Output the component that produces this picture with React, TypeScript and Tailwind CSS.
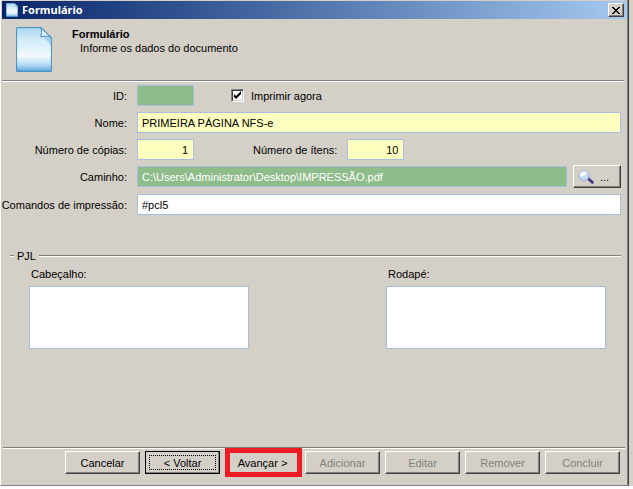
import { useState } from 'react';
import clsx from 'clsx';

const raised =
  'border border-t-white border-l-white border-r-[#404040] border-b-[#404040] shadow-[inset_-1px_-1px_0_#808080]';
const field = 'h-[21px] min-w-0 border border-[#a7bfde] pr-[5px] pl-1 text-[11px] leading-[19px] outline-none';
const label = 'flex w-[119px] shrink-0 justify-end whitespace-nowrap';

const footerButtons = [
  { id: 'cancel', text: 'Cancelar' },
  { id: 'back', text: '< Voltar', focused: true },
  { id: 'next', text: 'Avançar >', marked: true },
  { id: 'add', text: 'Adicionar', disabled: true },
  { id: 'edit', text: 'Editar', disabled: true },
  { id: 'remove', text: 'Remover', disabled: true },
  { id: 'finish', text: 'Concluir', disabled: true },
];

function PageIcon({ id, className }: { id: string; className: string }) {
  return (
    <svg viewBox="0 0 36 45" className={className} preserveAspectRatio="none" aria-hidden="true">
      <defs>
        <linearGradient id={id} x1="0" y1="0" x2="0" y2="1">
          <stop offset="0" stopColor="#a9d6ef" />
          <stop offset="0.3" stopColor="#d5edf9" />
          <stop offset="0.65" stopColor="#f3fafe" />
          <stop offset="0.85" stopColor="#b5dbf5" />
          <stop offset="1" stopColor="#5ba3dc" />
        </linearGradient>
      </defs>
      <path d="M.6 .6H25L35.4 10.5V44.4H.6Z" fill={`url(#${id})`} stroke="#3f8fc0" strokeWidth="1" />
      <path d="M26 10L35 11V19C33 15 30 12 26 10Z" fill="#7fb8de" opacity=".55" />
      <path d="M24.8 .8C26 4 25.8 7 24.6 9.8C28.8 8.7 32.5 9 35.2 10.6Z" fill="#e4f4fc" stroke="#3f8fc0" strokeWidth="1" />
    </svg>
  );
}

function SearchIcon() {
  return (
    <svg viewBox="0 0 16 14" className="h-[14px] w-4 shrink-0" aria-hidden="true">
      <path d="M9.5 8L14.4 12.4" stroke="#453c8c" strokeWidth="2.8" strokeLinecap="round" />
      <circle cx="6" cy="5.6" r="5" fill="#c0dcf8" stroke="#a3a9d6" strokeWidth="1" />
      <path d="M2 6.4A4.2 4.2 0 0 1 9.2 2.6A7 7 0 0 1 2 6.4Z" fill="#f5fbff" />
    </svg>
  );
}

function Rule() {
  return <div className="h-0.5 border-t border-b border-t-[#808080] border-b-white" />;
}

export default function App() {
  const [printNow, setPrintNow] = useState(true);

  return (
    <div className="min-h-screen bg-white font-['Liberation_Sans',Arial,sans-serif] text-[11px] leading-[14px] text-black">
      <div className="bg-[#d4d0c8] pr-1">
        <div className="flex min-h-[calc(100vh-3px)] flex-col border-r border-b border-l border-l-white border-r-[#404040] border-b-[#808080] bg-[#d4d0c8] pt-px pl-px shadow-[inset_-1px_0_0_#808080]">
          <div className="mr-px flex h-[18px] items-center bg-linear-to-r from-[#0a246a] to-[#a6caf0] pr-[3px] pl-1">
            <PageIcon id="title-page" className="h-[14px] w-3" />
            <h1 className="ml-1 flex-1 font-['Noto_Sans',sans-serif] font-bold text-white">Formulário</h1>
            <button aria-label="Fechar" className={clsx('flex h-[14px] w-4 items-center justify-center bg-[#d4d0c8]', raised)}>
              <svg viewBox="0 0 8 7" className="h-[7px] w-2" shapeRendering="crispEdges" aria-hidden="true">
                <path
                  d="M0 0h2v1h1v1h2V1h1V0h2v1H7v1H6v1H5v1h1v1h1v1h1v1H6V6H5V5H3v1H2v1H0V6h1V5h1V4h1V3H2V2H1V1H0Z"
                  fill="#000"
                />
              </svg>
            </button>
          </div>

          <header className="flex h-[61px] items-start pt-2 pl-[14px]">
            <PageIcon id="header-page" className="h-[45px] w-9" />
            <div className="ml-5">
              <h2 className="font-bold">Formulário</h2>
              <p className="pl-2">Informe os dados do documento</p>
            </div>
          </header>
          <div className="mr-1">
            <Rule />
          </div>

          <main className="flex flex-1 flex-col pr-[7px] pl-[6px]">
            <div className="mt-[3px] flex items-center gap-[10px]">
              <label htmlFor="id" className={label}>ID:</label>
              <input id="id" readOnly className={clsx(field, 'w-[57px] bg-[#8fbc8b]')} />
              <label className="ml-[27px] flex items-center gap-[7px]">
                <span className="relative flex size-[13px]">
                  <input
                    type="checkbox"
                    checked={printNow}
                    onChange={(e) => setPrintNow(e.target.checked)}
                    className="size-[13px] appearance-none border border-t-[#808080] border-r-white border-b-white border-l-[#808080] bg-white shadow-[inset_1px_1px_0_#404040,inset_-1px_-1px_0_#d4d0c8]"
                  />
                  {printNow && (
                    <svg viewBox="0 0 13 13" className="pointer-events-none absolute inset-0" aria-hidden="true">
                      <path d="M3 5v3l2 2 5-5V2L5 7Z" fill="#000" />
                    </svg>
                  )}
                </span>
                Imprimir agora
              </label>
            </div>

            <div className="mt-[6px] flex items-center gap-[10px]">
              <label htmlFor="name" className={label}>Nome:</label>
              <input id="name" defaultValue="PRIMEIRA PÁGINA NFS-e" className={clsx(field, 'flex-1 bg-[#ffffc0]')} />
            </div>

            <div className="mt-[6px] flex items-center gap-[10px]">
              <label htmlFor="copies" className={label}>Número de cópias:</label>
              <input id="copies" defaultValue="1" className={clsx(field, 'w-[57px] bg-[#ffffc0] text-right')} />
              <label htmlFor="items" className="ml-[49px]">Número de ítens:</label>
              <input id="items" defaultValue="10" className={clsx(field, 'w-[57px] bg-[#ffffc0] text-right')} />
            </div>

            <div className="mt-[5px] flex items-center gap-[10px]">
              <label htmlFor="path" className={label}>Caminho:</label>
              <div className="flex min-w-0 flex-1 items-center gap-[6px]">
                <input
                  id="path"
                  readOnly
                  value="C:\Users\Administrator\Desktop\IMPRESSÃO.pdf"
                  className={clsx(field, 'flex-1 bg-[#8fbc8b] text-white')}
                />
                <button className={clsx('flex h-[23px] w-12 items-center gap-[6px] pl-1', raised)}>
                  <SearchIcon />
                  ...
                </button>
              </div>
            </div>

            <div className="mt-[6px] flex items-center gap-[10px]">
              <label htmlFor="commands" className={label}>Comandos de impressão:</label>
              <input id="commands" defaultValue="#pcl5" className={clsx(field, 'flex-1 bg-white')} />
            </div>

            <section className="mt-[34px]">
              <div className="flex items-center gap-[3px] pl-[2px]">
                <div className="w-1">
                  <Rule />
                </div>
                <h3>PJL</h3>
                <div className="flex-1">
                  <Rule />
                </div>
              </div>
              <div className="mt-1 flex justify-between pr-[15px] pl-[21px]">
                <div className="flex w-[220px] flex-col gap-[5px]">
                  <label htmlFor="header" className="pl-0.5">Cabeçalho:</label>
                  <textarea id="header" className="h-[63px] resize-none border border-[#a7bfde] bg-white outline-none" />
                </div>
                <div className="flex w-[220px] flex-col gap-[5px]">
                  <label htmlFor="footer" className="pl-0.5">Rodapé:</label>
                  <textarea id="footer" className="h-[63px] resize-none border border-[#a7bfde] bg-white outline-none" />
                </div>
              </div>
            </section>
          </main>

          <footer className="pr-[3px] pl-px">
            <Rule />
            <div className="flex justify-end gap-[5px] pt-0.5 pr-[5px] pb-[11px]">
              {footerButtons.map((b) => (
                <button
                  key={b.id}
                  disabled={b.disabled}
                  className={clsx(
                    'relative h-[23px] w-[75px]',
                    raised,
                    b.disabled && 'text-[#808080]',
                    b.focused && 'outline-1 -outline-offset-1 outline-black'
                  )}
                >
                  {b.text}
                  {b.focused && <span className="absolute inset-[3px] border border-dotted border-black" />}
                  {b.marked && (
                    <span className="absolute -inset-y-1 -right-[3px] -left-px border-[5px] border-[#ed1c24]" />
                  )}
                </button>
              ))}
            </div>
          </footer>
        </div>
      </div>
    </div>
  );
}
